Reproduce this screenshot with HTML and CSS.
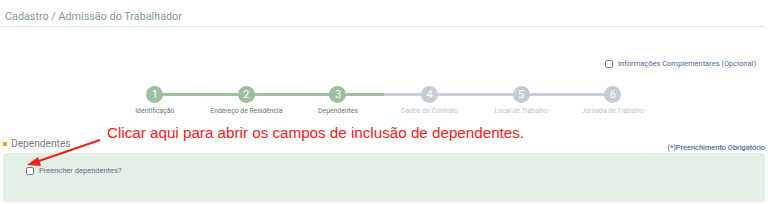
FILE: index.html
```html
<!DOCTYPE html>
<html lang="pt-BR">
<head>
<meta charset="utf-8">
<title>Cadastro / Admissão do Trabalhador</title>
<link rel="stylesheet" href="styles.css">
</head>
<body>
<div class="page">
  <header class="title">Cadastro / Admissão do Trabalhador</header>

  <div class="opt-row">
    <label class="opt"><span class="cb"></span>Informações Complementares (Opcional)</label>
  </div>

  <ol class="stepper">
    <li class="step done"><span class="circle">1</span><span class="label">Identificação</span></li>
    <li class="step done"><span class="circle">2</span><span class="label">Endereço de Residência</span></li>
    <li class="step done current"><span class="circle">3</span><span class="label">Dependentes</span></li>
    <li class="step"><span class="circle">4</span><span class="label">Dados do Contrato</span></li>
    <li class="step"><span class="circle">5</span><span class="label">Local de Trabalho</span></li>
    <li class="step last"><span class="circle">6</span><span class="label">Jornada de Trabalho</span></li>
  </ol>

  <section class="section">
    <div class="section-head">
      <h2 class="section-title"><span class="bullet"></span>Dependentes</h2>
      <span class="required">(*)Preenchimento Obrigatório</span>
    </div>
    <div class="panel">
      <label class="fill"><span class="cb"></span>Preencher dependentes?</label>
    </div>
    <div class="annotation">Clicar aqui para abrir os campos de inclusão de dependentes.</div>
    <svg class="arrow" width="110" height="40" viewBox="0 0 110 40">
      <line x1="100" y1="6" x2="36" y2="28" stroke="#f0201c" stroke-width="2"/>
      <polygon points="27,31 38,23 41,32" fill="#f0201c"/>
    </svg>
  </section>
</div>
</body>
</html>
```

FILE: styles.css
```css
* { box-sizing: border-box; }
html, body { margin: 0; padding: 0; background: #fff; }
body { font-family: Roboto, "Liberation Sans", sans-serif; width: 768px; height: 204px; overflow: hidden; }

.page { position: relative; }

.title {
  margin: 0 3px 0 0;
  padding: 10px 5px 4px;
  height: 27px;
  font-size: 10.8px;
  line-height: 13px;
  color: #7f9a86;
  border-bottom: 1px solid #dde3ee;
}

.opt-row {
  display: flex;
  justify-content: flex-end;
  align-items: flex-start;
  padding: 32px 12px 0 0;
  height: 59px;
}
.opt {
  display: flex;
  align-items: center;
  gap: 5px;
  font-size: 7.5px;
  line-height: 10px;
  color: #4d6b9a;
}
.cb {
  display: inline-block;
  width: 8px;
  height: 8px;
  border: 1px solid #7a7f86;
  border-radius: 2px;
  background: #fff;
}

.stepper {
  list-style: none;
  margin: 0;
  padding: 0 0 0 109px;
  display: flex;
  height: 49px;
}
.step {
  position: relative;
  width: 91.6px;
  display: flex;
  flex-direction: column;
  align-items: center;
}
.step::after {
  content: "";
  position: absolute;
  top: 7px;
  left: 50%;
  width: 100%;
  height: 3px;
  background: #c8cfd9;
  z-index: 0;
}
.step.done::after { background: #9fc0a2; }
.step.current::after { background: linear-gradient(to right, #9fc0a2 50%, #c8cfd9 50%); }
.step.last::after { display: none; }
.circle {
  position: relative;
  z-index: 1;
  width: 17px;
  height: 17px;
  border-radius: 50%;
  background: #c4ccd7;
  color: #fff;
  font-size: 11px;
  line-height: 17px;
  text-align: center;
}
.step.done .circle { background: #9dbf9f; }
.label {
  margin-top: 4px;
  font-size: 6.8px;
  line-height: 9px;
  color: #b9c1cc;
  white-space: nowrap;
}
.step.done .label { color: #5e7d66; }

.section { position: relative; padding: 0 3px; }
.section-head {
  display: flex;
  justify-content: space-between;
  align-items: flex-end;
  height: 18px;
}
.section-title {
  margin: 0;
  display: flex;
  align-items: center;
  gap: 4px;
  font-size: 10.2px;
  font-weight: normal;
  line-height: 12px;
  color: #6f7d8c;
  padding-bottom: 3px;
}
.bullet { width: 4px; height: 4px; background: #f3a21b; }
.required {
  font-size: 7.4px;
  font-weight: 500;
  color: #4d6b9a;
  padding-bottom: 1px;
}
.panel {
  height: 49px;
  background: #e4efe5;
  border-radius: 3px;
  padding: 13px 0 0 23px;
}
.fill {
  display: flex;
  align-items: center;
  gap: 5px;
  font-size: 7.5px;
  color: #5a6f8d;
}

.annotation {
  position: absolute;
  left: 107px;
  top: -11px;
  font-family: "Liberation Sans", Arial, sans-serif;
  font-size: 15.2px;
  line-height: 18px;
  color: #f0201c;
  white-space: nowrap;
}
.arrow {
  position: absolute;
  left: 0;
  top: -1px;
}
```
